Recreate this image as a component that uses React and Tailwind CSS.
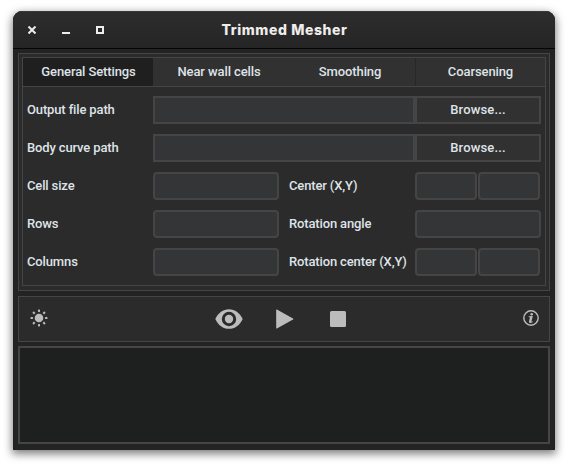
const fieldBase = 'h-7 border-2 border-[#454545] bg-[#343537] outline-none';

function Field({ label, className }) {
  return <input type="text" aria-label={label} className={`${fieldBase} ${className}`} />;
}

function TitleBar() {
  return (
    <header className="grid h-[38px] grid-cols-[1fr_auto_1fr] items-center border-b border-[#050505] bg-linear-to-b from-[#2d2d2d] to-[#252525] shadow-[inset_0_1px_0_#383838]">
      <div className="flex items-center gap-[26px] pl-[15px] text-[#ededeb]">
        <svg className="h-2 w-2" viewBox="0 0 8 8" stroke="currentColor" strokeWidth="2" fill="none">
          <path d="M.5 .5 7.5 7.5M7.5 .5 .5 7.5" />
        </svg>
        <svg className="h-2 w-2" viewBox="0 0 8 8" fill="currentColor">
          <path d="M0 6h8v2H0z" />
        </svg>
        <svg className="h-2 w-2" viewBox="0 0 8 8" stroke="currentColor" strokeWidth="2" fill="none">
          <path d="M1 1h6v6H1z" />
        </svg>
      </div>
      <h1 className="pl-px font-[Inter,sans-serif] text-[14px] leading-5 font-extrabold tracking-[0.6px] whitespace-nowrap text-[#ededeb]">
        Trimmed Mesher
      </h1>
    </header>
  );
}

function Tabs() {
  return (
    <nav className="grid h-[29px] grid-cols-[130px_131px_131px_130px] border-b border-[#454545] bg-[#313131] text-center leading-7 tracking-[-0.1px]">
      <button className="bg-[#1f1f1f] pl-px">General Settings</button>
      <button className="pl-px">Near wall cells</button>
      <button className="pl-px">Smoothing</button>
      <button className="border-l border-[#272727]">Coarsening</button>
    </nav>
  );
}

function PathRow({ label }) {
  return (
    <div className="flex h-7 items-center">
      <span className="w-[126px]">{label}</span>
      <Field label={label} className="w-[262px]" />
      <button className="h-7 w-[126px] border-2 border-[#454545] bg-[#313131] leading-6 tracking-[0.15px]">
        Browse...
      </button>
    </div>
  );
}

function ValueRow({ left, right, pair }) {
  return (
    <div className="flex h-7 items-center">
      <span className="w-[126px]">{left}</span>
      <Field label={left} className="w-[126px] rounded-[4px]" />
      <span className="w-[136px] pl-[10px] whitespace-nowrap">{right}</span>
      {pair ? (
        <div className="flex gap-px">
          <Field label={`${right} X`} className="w-[62px] rounded-[4px]" />
          <Field label={`${right} Y`} className="w-[62px] rounded-[4px]" />
        </div>
      ) : (
        <Field label={right} className="w-[126px] rounded-[4px]" />
      )}
    </div>
  );
}

const rays = [0, 45, 90, 135, 180, 225, 270, 315];

function Toolbar() {
  return (
    <section className="mt-[5px] flex h-[46px] items-center border border-[#454545] bg-[#2b2b2b] pl-[11px] text-[#bcbcbc]">
      <button aria-label="Theme">
        <svg className="-mt-0.5 block h-[18px] w-[18px]" viewBox="0 0 18 18" fill="currentColor">
          <circle cx="9" cy="9" r="4.3" />
          {rays.map((a) => (
            <rect key={a} x="8" y="0.6" width="2" height="2.300" transform={`rotate(${a} 9 9)`} />
          ))}
        </svg>
      </button>
      <button aria-label="Preview" className="ml-[167px]">
        <svg className="block h-5 w-7" viewBox="0 0 28 20" fill="currentColor" fillRule="evenodd">
          <path d="M.3 10C3.400 3.600 8 .2 14 .2S24.600 3.600 27.700 10C24.600 16.400 20 19.800 14 19.800S3.400 16.400 .3 10ZM14 2.800a7.200 7.200 0 1 0 0 14.400a7.200 7.200 0 1 0 0-14.400Z" />
          <circle cx="14" cy="10" r="4.200" />
        </svg>
      </button>
      <button aria-label="Run" className="ml-[33px]">
        <svg className="block h-5 w-[18px]" viewBox="0 0 18 20" fill="currentColor">
          <path d="M.9 .5Q.2 .2 .2 1v18Q.2 19.800 .9 19.500L17 10.600Q17.900 10 17 9.400Z" />
        </svg>
      </button>
      <button aria-label="Stop" className="ml-9">
        <svg className="block h-4 w-4" viewBox="0 0 16 16" fill="currentColor">
          <rect width="16" height="16" rx="1.500" />
        </svg>
      </button>
      <button aria-label="About" className="ml-[177px]">
        <svg className="-mt-0.5 block h-4 w-4" viewBox="0 0 16 16" fill="currentColor">
          <circle cx="8" cy="8" r="7.200" fill="none" stroke="currentColor" strokeWidth="1.400" />
          <circle cx="8.700" cy="4.200" r="1.300" />
          <path d="M5.700 6.200 9.800 5.900 8.500 11.300Q8.400 12 9 11.700L9.900 11.200V12Q8.500 13.100 7.200 13.100 5.700 13 6 11.500L6.900 7.400Q7 6.900 5.700 6.900Z" />
        </svg>
      </button>
    </section>
  );
}

export default function App() {
  return (
    <div className="h-[466px] w-[568px] bg-white px-[13px] pt-[11px] font-[Roboto,sans-serif] text-[13px] leading-4 font-medium text-[#dfe3e8]">
      <main className="h-[439px] w-[542px] overflow-hidden rounded-t-[9px] bg-[#232323] shadow-[0_3px_9px_1px_rgba(0,0,0,0.5)]">
        <TitleBar />
        <div className="px-[5px] pt-1">
          <section className="h-[238px] border border-[#454545] bg-[#2b2b2b] p-[3px]">
            <div className="h-[229px] border border-[#454545]">
              <Tabs />
              <div className="flex flex-col gap-[10px] pt-[9px] pl-1 tracking-[-0.14px]">
                <PathRow label="Output file path" />
                <PathRow label="Body curve path" />
                <ValueRow left="Cell size" right="Center (X,Y)" pair />
                <ValueRow left="Rows" right="Rotation angle" />
                <ValueRow left="Columns" right="Rotation center (X,Y)" pair />
              </div>
            </div>
          </section>
          <Toolbar />
          <section className="mt-1 h-[98px] border-2 border-[#454545] bg-[#1e201f]" />
        </div>
      </main>
    </div>
  );
}
